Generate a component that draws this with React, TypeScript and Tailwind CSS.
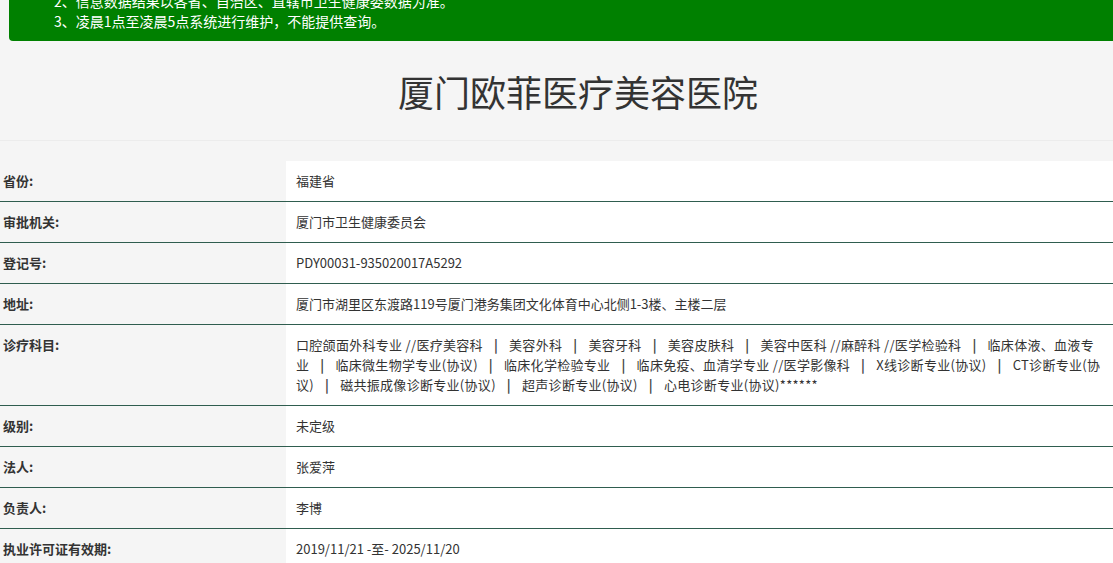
import React from 'react'

type Row = {
  label: string
  value: React.ReactNode
}

// each line is split on ' | ' and the pipes get a wider gap, as on the original page
const subjectLines = [
  '口腔颌面外科专业 //医疗美容科 | 美容外科 | 美容牙科 | 美容皮肤科 | 美容中医科 //麻醉科 //医学检验科 | 临床体液、血液专',
  '业 | 临床微生物学专业(协议) | 临床化学检验专业 | 临床免疫、血清学专业 //医学影像科 | X线诊断专业(协议) | CT诊断专业(协',
  '议) | 磁共振成像诊断专业(协议) | 超声诊断专业(协议) | 心电诊断专业(协议)******',
]

function SubjectLine({ text }: { text: string }) {
  const parts = text.split(' | ')
  return (
    <div className="whitespace-nowrap tracking-[0.3px]">
      {parts.map((part, i) => (
        <React.Fragment key={i}>
          {i > 0 && <span className="px-[11px] font-bold text-[#444]">|</span>}
          {part}
        </React.Fragment>
      ))}
    </div>
  )
}

const rows: Row[] = [
  { label: '省份:', value: '福建省' },
  { label: '审批机关:', value: '厦门市卫生健康委员会' },
  { label: '登记号:', value: 'PDY00031-935020017A5292' },
  { label: '地址:', value: '厦门市湖里区东渡路119号厦门港务集团文化体育中心北侧1-3楼、主楼二层' },
  {
    label: '诊疗科目:',
    value: subjectLines.map((line, i) => <SubjectLine key={i} text={line} />),
  },
  { label: '级别:', value: '未定级' },
  { label: '法人:', value: '张爱萍' },
  { label: '负责人:', value: '李博' },
  { label: '执业许可证有效期:', value: '2019/11/21 -至- 2025/11/20' },
]

function Notice() {
  return (
    <div className="ml-[9px] -mt-[9px] rounded-bl-[4px] bg-[#008000] pl-[45px] pb-[10px] text-[14px] leading-[20px] text-white">
      <p>2、信息数据结果以各省、自治区、直辖市卫生健康委数据为准。</p>
      <p>3、凌晨1点至凌晨5点系统进行维护，不能提供查询。</p>
    </div>
  )
}

function InfoTable() {
  return (
    <div className="w-[1156px]">
      {rows.map(row => (
        <div key={row.label} className="grid grid-cols-[286px_1fr] border-b border-[#2f5d4f]">
          <div className="px-[3px] py-[10px] text-[13px] font-bold leading-[20px] text-[#333]">
            {row.label}
          </div>
          <div className="bg-white px-[10px] py-[10px] text-[13px] leading-[20px] text-[#333]">
            {row.value}
          </div>
        </div>
      ))}
    </div>
  )
}

export default function App() {
  return (
    <div
      className="h-[563px] w-full overflow-hidden bg-[#f5f5f5]"
      style={{ fontFamily: '"Noto Sans CJK SC", "Noto Sans", sans-serif' }}
    >
      <div className="w-[1156px]">
        <Notice />
        <div className="flex h-[100px] items-center justify-center border-b border-[#ececec] text-[36px] leading-none text-[#333]">
          厦门欧菲医疗美容医院
        </div>
        <div className="h-[20px]" />
        <InfoTable />
      </div>
    </div>
  )
}
